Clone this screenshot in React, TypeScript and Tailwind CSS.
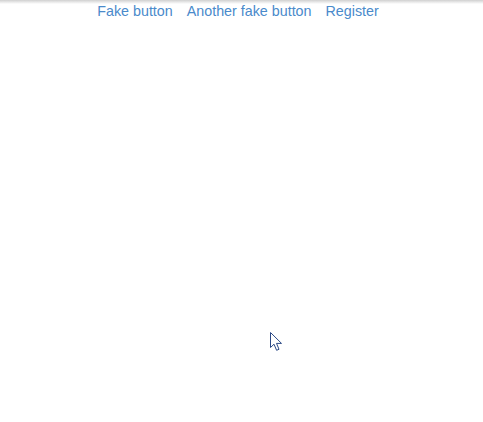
import React from "react";

export default function App() {
  return (
    <div className="relative h-[422px] w-full overflow-hidden bg-white">
      <div className="absolute left-0 top-0 h-[4px] w-full bg-gradient-to-b from-[#d0d0d0] to-white/0" />
      <nav
        className="flex justify-center gap-[14px] pr-[7px] pt-[3px] text-[14.3px] leading-[16px] text-[#4a8acb]"
        style={{ fontFamily: '"Liberation Sans", Arial, sans-serif' }}
      >
        <a href="#" className="cursor-pointer">Fake button</a>
        <a href="#" className="cursor-pointer">Another fake button</a>
        <a href="#" className="cursor-pointer">Register</a>
      </nav>
      <svg
        className="absolute left-[270px] top-[332px]"
        width="14"
        height="20"
        viewBox="0 0 14 20"
      >
        <path
          d="M0.5 0.5 L0.5 15.5 L4 12.2 L6.6 18.3 L9 17.3 L6.5 11.4 L11.5 11.4 Z"
          fill="white"
          stroke="#2c4a86"
          strokeWidth="1"
          strokeLinejoin="round"
        />
      </svg>
    </div>
  );
}
